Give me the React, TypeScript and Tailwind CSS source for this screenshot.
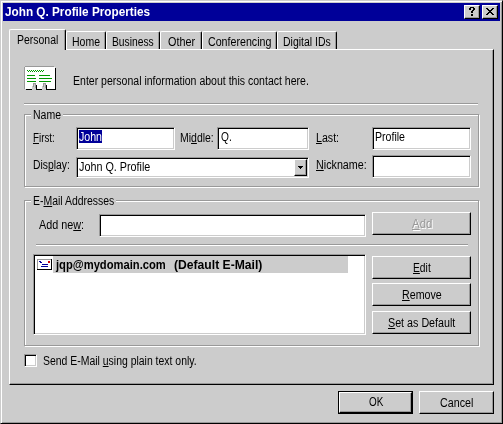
import { useLayoutEffect, useRef } from "react";
import type { ReactNode } from "react";

const RAISED =
  "border border-t-white border-l-white border-r-black border-b-black shadow-[inset_-1px_-1px_0_#999]";
const SUNKEN =
  "border border-t-[#999] border-l-[#999] border-r-white border-b-white bg-white shadow-[inset_1px_1px_0_#000,inset_-1px_-1px_0_#ccc]";
const ETCHED = "border border-[#999] shadow-[1px_1px_0_#fff,inset_1px_1px_0_#fff]";

/** One line of text, condensed horizontally to the width of its box. */
function Text({ className, children }: { className: string; children: ReactNode }) {
  const box = useRef<HTMLSpanElement>(null);
  const line = useRef<HTMLSpanElement>(null);
  useLayoutEffect(() => {
    if (box.current && line.current) {
      const ratio = box.current.clientWidth / line.current.offsetWidth;
      line.current.style.transform = `scaleX(${ratio})`;
    }
  }, []);
  return (
    <span ref={box} className={`block h-[14px] shrink-0 whitespace-pre leading-[14px] ${className}`}>
      <span ref={line} className="inline-block origin-left align-top">
        {children}
      </span>
    </span>
  );
}

function Key({ children }: { children: ReactNode }) {
  return <span className="underline decoration-1 underline-offset-[1px]">{children}</span>;
}

function Tab({ size, text, label }: { size: string; text: string; label: string }) {
  return (
    <div
      className={`flex h-[18px] justify-center rounded-t-[2px] border border-b-0 border-t-white border-l-white border-r-black pt-[3px] shadow-[inset_-1px_0_0_#999] ${size}`}
    >
      <Text className={text}>{label}</Text>
    </div>
  );
}

function Button({ className = "", children }: { className?: string; children: ReactNode }) {
  return (
    <button className={`flex h-[23px] shrink-0 justify-center bg-[#ccc] pt-[4px] ${RAISED} ${className}`}>
      {children}
    </button>
  );
}

function Rule({ className }: { className: string }) {
  return <div className={`h-[2px] border-t border-b border-t-[#999] border-b-white ${className}`} />;
}

function CardIcon() {
  return (
    <svg width="32" height="24" viewBox="0 0 32 24" shapeRendering="crispEdges">
      <path d="M2 2h30v22H2z" fill="#000" />
      <path d="M1 1h30v22H1z" fill="#fff" />
      <path d="M0 1h1v22H0zM1 0h29v1H1z" fill="#999" />
      <path d="M0 0h1v1H0zM31 0h1v2h-1zM30 0h1v1h-1z" fill="#ccc" />
      <path
        d="M3 4h1v1H3zM5 4h1v1H5zM7 4h1v1H7zM9 4h1v1H9zM11 4h1v1h-1zM13 4h1v1h-1zM15 4h1v1h-1zM17 4h1v1h-1zM19 4h1v1h-1zM4 5h1v1H4zM6 5h1v1H6zM8 5h1v1H8zM10 5h1v1h-1zM12 5h1v1h-1zM14 5h1v1h-1zM16 5h1v1h-1zM18 5h1v1h-1zM3 9h8v1H3zM3 12h9v1H3zM3 15h9v1H3zM15 9h11v1H15zM15 12h13v1H15zM15 15h12v1H15z"
        fill="#009900"
      />
      <path d="M8 20h4v4H8zM18 20h4v4h-4z" fill="#ccc" />
      <path d="M9 17h3v1H9zM9 18h1v3H9zM11 18h1v4h-1zM19 17h3v1h-3zM19 18h1v3h-1zM21 18h1v4h-1z" fill="#999" />
      <path d="M10 18h1v3h-1zM20 18h1v3h-1z" fill="#ccc" />
      <path d="M12 19h1v5h-1zM22 19h1v5h-1z" fill="#000" />
    </svg>
  );
}

function MailIcon() {
  return (
    <svg width="15" height="11" viewBox="0 0 15 11" shapeRendering="crispEdges">
      <path d="M0 0h15v11H0z" fill="#000" />
      <path d="M0 0h14v10H0z" fill="#999" />
      <path d="M1 1h13v9H1z" fill="#fff" />
      <path d="M2 2h2v1H2zM3 3h2v1H3zM5 5h6v1H5zM4 7h7v1H4z" fill="#000099" />
      <path d="M11 2h2v2h-2z" fill="#cc0000" />
    </svg>
  );
}

function TitleBar() {
  const cap =
    "flex h-[14px] w-[16px] border border-t-white border-l-white border-r-black border-b-black bg-[#ccc] shadow-[inset_-1px_-1px_0_#999]";
  return (
    <div className="flex h-[18px] bg-[#000099] pl-[2px] pr-[2px] pt-[2px] text-white">
      <Text className="w-[145px] text-[12px] font-bold">John Q. Profile Properties</Text>
      <div className="ml-auto flex gap-[2px]">
        <button className={cap}>
          <svg width="14" height="12" viewBox="0 0 14 12" shapeRendering="crispEdges">
            <path d="M5 1h4v1H5zM4 2h2v2H4zM8 2h2v2H8zM7 4h2v1H7zM6 5h2v2H6zM6 8h2v2H6z" fill="#000" />
          </svg>
        </button>
        <button className={cap}>
          <svg width="14" height="12" viewBox="0 0 14 12" shapeRendering="crispEdges">
            <path
              d="M3 2h2v1H3zM9 2h2v1H9zM4 3h2v1H4zM8 3h2v1H8zM5 4h4v1H5zM6 5h2v1H6zM5 6h4v1H5zM4 7h2v1H4zM8 7h2v1H8zM3 8h2v1H3zM9 8h2v1H9z"
              fill="#000"
            />
          </svg>
        </button>
      </div>
    </div>
  );
}

function NameGroup() {
  return (
    <section className={`relative mt-[9px] h-[73px] w-[455px] pl-[8px] pt-[12px] ${ETCHED}`}>
      <div className="absolute -top-[7px] left-[6px] bg-[#ccc] pl-[2px] pr-[2px]">
        <Text className="w-[28px]">Name</Text>
      </div>
      <div className="flex">
        <div className="w-[43px] pt-[4px]">
          <Text className="w-[22px]"><Key>F</Key>irst:</Text>
        </div>
        <div className={`h-[23px] w-[99px] pl-[2px] pt-[2px] ${SUNKEN}`}>
          <div className="h-[13px] w-[23px] bg-[#000099] text-white">
            <Text className="w-[23px]">John</Text>
          </div>
        </div>
        <div className="ml-[5px] w-[37px] pt-[4px]">
          <Text className="w-[34px]">Mi<Key>d</Key>dle:</Text>
        </div>
        <div className={`h-[23px] w-[92px] pl-[3px] pt-[2px] ${SUNKEN}`}>
          <Text className="w-[11px]">Q.</Text>
        </div>
        <div className="ml-[7px] w-[56px] pt-[4px]">
          <Text className="w-[23px]"><Key>L</Key>ast:</Text>
        </div>
        <div className={`h-[23px] w-[99px] pl-[2px] pt-[2px] ${SUNKEN}`}>
          <Text className="w-[30px]">Profile</Text>
        </div>
      </div>
      <div className="mt-[5px] flex">
        <div className="w-[43px] pt-[3px]">
          <Text className="w-[37px]">Dis<Key>p</Key>lay:</Text>
        </div>
        <div className={`mt-[2px] flex h-[21px] w-[233px] justify-between p-[1px] ${SUNKEN}`}>
          <Text className="ml-px mt-px w-[71px]">John Q. Profile</Text>
          <button className={`flex h-[17px] w-[13px] items-center justify-center bg-[#ccc] ${RAISED}`}>
            <svg width="5" height="3" viewBox="0 0 5 3" shapeRendering="crispEdges">
              <path d="M0 0h5v1H0zM1 1h3v1H1zM2 2h1v1H2z" fill="#000" />
            </svg>
          </button>
        </div>
        <div className="ml-[7px] w-[56px] pt-[3px]">
          <Text className="w-[51px]"><Key>N</Key>ickname:</Text>
        </div>
        <div className={`h-[23px] w-[99px] ${SUNKEN}`} />
      </div>
    </section>
  );
}

function EmailGroup() {
  return (
    <section className={`relative mt-[13px] h-[146px] w-[455px] pl-[8px] pt-[11px] ${ETCHED}`}>
      <div className="absolute -top-[7px] left-[6px] bg-[#ccc] pl-[2px] pr-[2px]">
        <Text className="w-[81px]">E-<Key>M</Key>ail Addresses</Text>
      </div>
      <div className="flex">
        <div className="w-[66px] pl-[6px] pt-[6px]">
          <Text className="w-[45px]">Add ne<Key>w</Key>:</Text>
        </div>
        <div className={`mt-[2px] h-[23px] w-[267px] ${SUNKEN}`} />
        <Button className="ml-[6px] w-[99px]">
          <Text className="w-[20px] text-[#999] [text-shadow:1px_1px_0_#fff]"><Key>A</Key>dd</Text>
        </Button>
      </div>
      <Rule className="ml-[3px] mt-[7px] w-[432px]" />
      <div className="mt-[8px] flex">
        <div className={`h-[81px] w-[333px] p-[1px] ${SUNKEN}`}>
          <div className="flex h-[17px]">
            <div className="w-[18px] pl-[2px] pt-[3px]">
              <MailIcon />
            </div>
            <div className="flex w-[295px] bg-[#ccc] pl-[3px] pt-[2px] font-bold">
              <Text className="w-[110px]">jqp@mydomain.com</Text>
              <Text className="ml-[8px] w-[88px]">(Default E-Mail)</Text>
            </div>
          </div>
        </div>
        <div className="ml-[6px] flex flex-col pt-[2px]">
          <Button className="w-[99px]">
            <Text className="w-[18px]"><Key>E</Key>dit</Text>
          </Button>
          <Button className="mt-[4px] w-[99px]">
            <Text className="w-[40px]"><Key>R</Key>emove</Text>
          </Button>
          <Button className="mt-[5px] w-[99px]">
            <Text className="w-[67px]"><Key>S</Key>et as Default</Text>
          </Button>
        </div>
      </div>
    </section>
  );
}

export default function App() {
  return (
    <main className="h-[424px] w-[503px] overflow-hidden border border-t-[#ccc] border-l-[#ccc] border-r-black border-b-black bg-[#ccc] p-[2px] font-['Liberation_Sans',Arial,sans-serif] text-[12px] text-black shadow-[inset_1px_1px_0_#fff,inset_-1px_-1px_0_#999]">
      <TitleBar />
      <div className="ml-[6px] mt-[8px] flex h-[20px] items-end">
        <div className="z-10 -mb-px flex h-[21px] w-[57px] justify-center rounded-t-[2px] border border-b-0 border-t-white border-l-white border-r-black bg-[#ccc] pt-[3px] shadow-[inset_-1px_0_0_#999]">
          <Text className="w-[41px]">Personal</Text>
        </div>
        <Tab size="w-[40px]" text="w-[28px]" label="Home" />
        <Tab size="w-[54px]" text="w-[42px]" label="Business" />
        <Tab size="w-[42px]" text="w-[27px]" label="Other" />
        <Tab size="w-[75px]" text="w-[63px]" label="Conferencing" />
        <Tab size="w-[60px]" text="w-[48px]" label="Digital IDs" />
      </div>
      <div className={`ml-[6px] h-[336px] w-[485px] pl-[14px] pt-[16px] ${RAISED}`}>
        <div className="flex h-[24px]">
          <CardIcon />
          <Text className="ml-[17px] mt-[8px] w-[236px]">Enter personal information about this contact here.</Text>
        </div>
        <Rule className="mt-[13px] w-[454px]" />
        <NameGroup />
        <EmailGroup />
        <div className="mt-[8px] flex">
          <div className={`h-[13px] w-[13px] ${SUNKEN}`} />
          <Text className="ml-[6px] w-[154px]">Send E-Mail <Key>u</Key>sing plain text only.</Text>
        </div>
      </div>
      <div className="mr-[6px] mt-[6px] flex justify-end gap-[6px]">
        <div className="h-[23px] w-[75px] border border-black">
          <button className="flex h-[21px] w-[73px] justify-center border border-t-white border-l-white border-r-black border-b-black pt-[2px] shadow-[inset_-1px_-1px_0_#999]">
            <Text className="w-[14px]">OK</Text>
          </button>
        </div>
        <Button className="w-[75px]">
          <Text className="w-[33px]">Cancel</Text>
        </Button>
      </div>
    </main>
  );
}
